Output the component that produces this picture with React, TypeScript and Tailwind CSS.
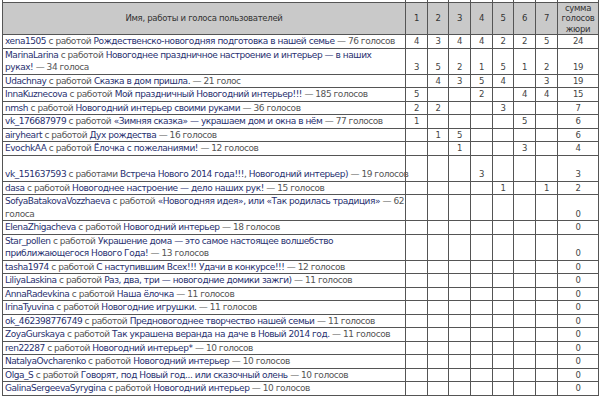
type Part = [string, boolean]

interface Row {
    parts: Part[]
    scores: (number | null)[]
    total: number
}

const _ = null

function entry(user: string, title: string, votes: string): Part[] {
    return [[user, true], [" с работой ", false], [title, true], [" — " + votes, false]]
}

// split parts on "\n" into separate lines so the wraps match the screenshot
function toLines(parts: Part[]): Part[][] {
    const lines: Part[][] = [[]]
    for (const [text, link] of parts) {
        text.split("\n").forEach((piece, i) => {
            if (i > 0) lines.push([])
            if (piece) lines[lines.length - 1].push([piece, link])
        })
    }
    return lines
}

const rows: Row[] = [
    { parts: entry("xena1505", "Рождественско-новогодняя подготовка в нашей семье", "76 голосов"), scores: [4, 3, 4, 4, 2, 2, 5], total: 24 },
    { parts: entry("MarinaLarina", "Новогоднее праздничное настроение и интерьер — в наших\nруках!", "34 голоса"), scores: [3, 5, 2, 1, 5, 1, 2], total: 19 },
    { parts: entry("Udachnay", "Сказка в дом пришла.", "21 голос"), scores: [_, 4, 3, 5, 4, _, 3], total: 19 },
    { parts: entry("InnaKuznecova", "Мой праздничный Новогодний интерьер!!!", "185 голосов"), scores: [5, _, _, 2, _, 4, 4], total: 15 },
    { parts: entry("nmsh", "Новогодний интерьер своими руками", "36 голосов"), scores: [2, 2, _, _, 3, _, _], total: 7 },
    { parts: entry("vk_176687979", "«Зимняя сказка» — украшаем дом и окна в нём", "77 голосов"), scores: [1, _, _, _, _, 5, _], total: 6 },
    { parts: entry("airyheart", "Дух рождества", "16 голосов"), scores: [_, 1, 5, _, _, _, _], total: 6 },
    { parts: entry("EvochkAA", "Ёлочка с пожеланиями!", "12 голосов"), scores: [_, _, 1, _, _, 3, _], total: 4 },
    {
        parts: [
            ["\nvk_151637593", true],
            [" с работами ", false],
            ["Встреча Нового 2014 года!!!", true],
            [", ", false],
            ["Новогодний интерьер)", true],
            [" — 19 голосов", false],
        ],
        scores: [_, _, _, 3, _, _, _],
        total: 3,
    },
    { parts: entry("dasa", "Новогоднее настроение — дело наших рук!", "15 голосов"), scores: [_, _, _, _, 1, _, 1], total: 2 },
    { parts: entry("SofyaBatakovaVozzhaeva", "«Новогодняя идея», или «Так родилась традиция»", "62\nголоса"), scores: [], total: 0 },
    { parts: entry("ElenaZhigacheva", "Новогодний интерьер", "18 голосов"), scores: [], total: 0 },
    { parts: entry("Star_pollen", "Украшение дома — это самое настоящее волшебство\nприближающегося Нового Года!", "13 голосов"), scores: [], total: 0 },
    { parts: entry("tasha1974", "С наступившим Всех!!! Удачи в конкурсе!!!", "12 голосов"), scores: [], total: 0 },
    { parts: entry("LiliyaLaskina", "Раз, два, три — новогодние домики зажги)", "11 голосов"), scores: [], total: 0 },
    { parts: entry("AnnaRadevkina", "Наша ёлочка", "11 голосов"), scores: [], total: 0 },
    { parts: entry("IrinaTyuvina", "Новогодние игрушки.", "11 голосов"), scores: [], total: 0 },
    { parts: entry("ok_462398776749", "Предновогоднее творчество нашей семьи", "11 голосов"), scores: [], total: 0 },
    { parts: entry("ZoyaGurskaya", "Так украшена веранда на даче в Новый 2014 год.", "11 голосов"), scores: [], total: 0 },
    { parts: entry("ren22287", "Новогодний интерьер*", "10 голосов"), scores: [], total: 0 },
    { parts: entry("NatalyaOvcharenko", "Новогодний интерьер", "10 голосов"), scores: [], total: 0 },
    { parts: entry("Olga_S", "Говорят, под Новый год... или сказочный олень", "10 голосов"), scores: [], total: 0 },
    { parts: entry("GalinaSergeevaSyrygina", "Новогодний интерьер", "10 голосов"), scores: [], total: 0 },
]

const cell = "border border-[#555]"
const jury = [1, 2, 3, 4, 5, 6, 7]

export default function App() {
    return (
        <div className="w-[600px] h-[396px] overflow-hidden bg-white pl-[2px] font-['DejaVu_Sans',Verdana,sans-serif] text-[#333]">
            <table className="w-[596px] table-fixed border-collapse">
                <colgroup>
                    <col className="w-[403px]" />
                    <col className="w-[22px]" />
                    <col className="w-[21px]" />
                    <col className="w-[22px]" />
                    <col className="w-[22px]" />
                    <col className="w-[21px]" />
                    <col className="w-[22px]" />
                    <col className="w-[22px]" />
                    <col className="w-[41px]" />
                </colgroup>
                <thead>
                    <tr className="h-[2px]">
                        {Array.from({ length: 9 }).map((_, i) => (
                            <td key={i} className="border-x border-[#555] p-0"></td>
                        ))}
                    </tr>
                    <tr className="h-[31px] bg-[#c9c9c9] text-[8.5px] leading-[10.5px] tracking-[-0.3px]">
                        <th className={`${cell} font-normal text-center`}>Имя, работы и голоса пользователей</th>
                        {jury.map((n) => (
                            <th key={n} className={`${cell} font-normal text-center`}>{n}</th>
                        ))}
                        <th className={`${cell} font-normal text-center`}>
                            сумма голосов жюри
                        </th>
                    </tr>
                </thead>
                <tbody className="text-[9px] leading-[12.5px] tracking-[-0.45px]">
                    {rows.map((row, i) => (
                        <tr key={i}>
                            <td className={`${cell} px-[2px] align-top`}>
                                {toLines(row.parts).map((line, l) => (
                                    <div key={l} className="whitespace-pre min-h-[12.5px]">
                                        {line.map(([text, link], j) => (
                                            <span key={j} className={link ? "text-[#28306f]" : "text-[#555]"}>
                                                {text}
                                            </span>
                                        ))}
                                    </div>
                                ))}
                            </td>
                            {jury.map((n, k) => (
                                <td key={n} className={`${cell} text-center align-bottom text-[8.5px] text-[#444]`}>
                                    {row.scores[k] ?? ""}
                                </td>
                            ))}
                            <td className={`${cell} text-center align-bottom text-[8.5px] text-[#444]`}>{row.total}</td>
                        </tr>
                    ))}
                    <tr className="h-[13px]">
                        {Array.from({ length: 9 }).map((_, i) => (
                            <td key={i} className={cell}></td>
                        ))}
                    </tr>
                </tbody>
            </table>
        </div>
    )
}
